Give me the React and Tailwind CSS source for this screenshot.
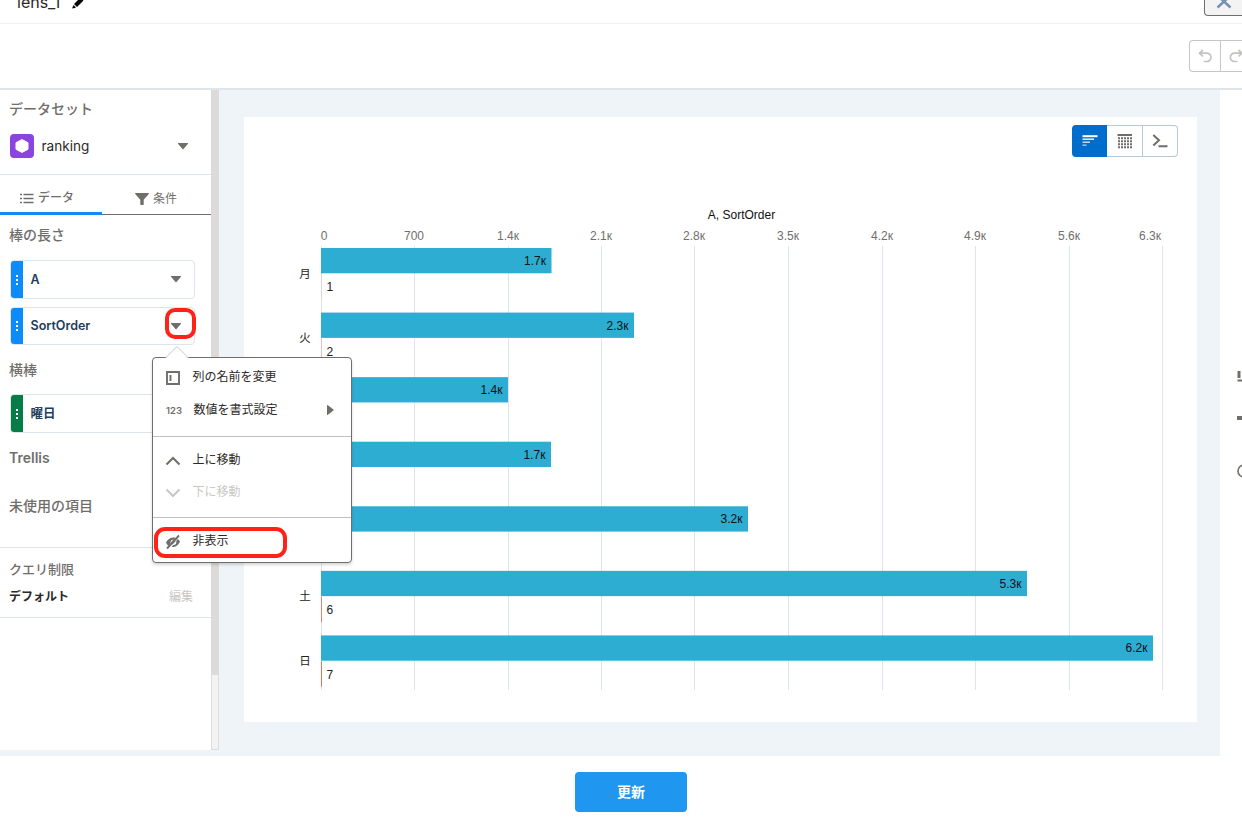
import clsx from 'clsx'

const bars = [
  { day: '月', order: 1, end: 551.5, label: '1.7к' },
  { day: '火', order: 2, end: 634, label: '2.3к' },
  { day: '水', order: 3, end: 508, label: '1.4к' },
  { day: '木', order: 4, end: 551, label: '1.7к' },
  { day: '金', order: 5, end: 748, label: '3.2к' },
  { day: '土', order: 6, end: 1027, label: '5.3к' },
  { day: '日', order: 7, end: 1153, label: '6.2к' },
]

const ticks = ['0', '700', '1.4к', '2.1к', '2.8к', '3.5к', '4.2к', '4.9к', '5.6к', '6.3к']
const tickX = [321, 414, 508, 601, 694, 788, 882, 975, 1069, 1162]

function Caret({ className }) {
  return (
    <svg viewBox="0 0 10 7" className={clsx('w-2.5 h-[7px] fill-[#706e6b]', className)}>
      <path d="M.6 0h8.8c.6 0 .8.5.4.9L5.5 6.1c-.3.4-.7.4-1 0L.2.9C-.2.5 0 0 .6 0z" />
    </svg>
  )
}

function Field({ name, color, className }) {
  return (
    <div className={clsx('ml-2.5 w-[185px] flex items-center rounded border border-[#dde5ec] overflow-hidden', className)}>
      <div className={clsx('w-3 h-full flex flex-col items-center justify-center gap-0.5', color)}>
        <i className="w-0.5 h-0.5 bg-white" />
        <i className="w-0.5 h-0.5 bg-white" />
        <i className="w-0.5 h-0.5 bg-white" />
      </div>
      <span className="flex-1 pl-[7.5px] text-[12.5px] leading-4 font-semibold text-[#1f3d5c]">{name}</span>
      <Caret className="mr-[13px]" />
    </div>
  )
}

function Label({ children, className }) {
  return <div className={clsx('pl-[9px] text-sm leading-5 font-medium text-[#706e6b]', className)}>{children}</div>
}

function Sidebar() {
  return (
    <div className="w-[211px] h-[660px] bg-white shrink-0">
      <Label className="pt-[9px]">データセット</Label>
      <div className="mt-[15px] h-6 pl-2.5 flex items-center">
        <div className="w-6 h-6 rounded bg-[#8a45e0] flex items-center justify-center">
          <svg viewBox="0 0 14 14" className="w-3.5 h-3.5">
            <path d="M7 .6 13 3.7v6.6L7 13.4 1 10.3V3.7z" fill="#fff" stroke="#fff" strokeWidth="1" strokeLinejoin="round" />
          </svg>
        </div>
        <span className="pl-[7.5px] flex-1 text-[13.6px] text-[#2b2826]">ranking</span>
        <Caret className="mr-[23px]" />
      </div>

      {/* Tabs */}
      <div className="mt-4 h-[41px] border-t border-[#dde5ec] flex text-xs text-[#706e6b]">
        <div className="w-[102px] pt-[9px] pl-5 flex items-center border-b-3 border-[#1b87f3] font-medium">
          <svg viewBox="0 0 14 11" className="w-3.5 h-[11px] mr-1" stroke="#706e6b" strokeWidth="1.3">
            <path d="M0 1.500h2M3.500 1.500H13.500M0 5.500h2M3.500 5.500H13.500M0 9.500h2M3.500 9.500H13.500" />
          </svg>
          <span className="-mt-px">データ</span>
        </div>
        <div className="flex-1 pt-[9px] pl-[33px] flex items-center border-b border-[#706e6b]">
          <svg viewBox="0 0 14 12" className="w-3.5 h-3 mr-1 fill-[#706e6b]">
            <path d="M.6 0h12.8c.5 0 .7.5.4.9L8.7 6.7v4.5c0 .4-.2.8-.6.8H6c-.4 0-.7-.4-.7-.8V6.7L.2.9C-.1.5.1 0 .6 0z" />
          </svg>
          <span className="-mt-px">条件</span>
        </div>
      </div>

      <Label className="pt-[10px]">棒の長さ</Label>
      <Field name="A" color="bg-[#0d8bfa]" className="mt-[15px] h-[39px]" />
      <Field name="SortOrder" color="bg-[#0d8bfa]" className="mt-2 h-[38px]" />
      <Label className="pt-[15px]">横棒</Label>
      <Field name="曜日" color="bg-[#077c46]" className="mt-[14px] h-[39px]" />
      <Label className="pt-[15px] font-semibold">Trellis</Label>
      <Label className="pt-[28px]">未使用の項目</Label>
      <div className="mt-[31px] h-[71px] border-y border-[#dde5ec]">
        <div className="pl-[9px] pt-3 text-[13px] leading-[18px] font-medium text-[#706e6b]">クエリ制限</div>
        <div className="pl-[9px] pr-[18px] pt-[10px] flex justify-between text-xs leading-[18px]">
          <span className="font-bold text-[#2b2826]">デフォルト</span>
          <span className="text-[#c9c7c5]">編集</span>
        </div>
      </div>
    </div>
  )
}

function Chart() {
  return (
    <svg viewBox="244 117 953 605" className="absolute inset-0 w-[953px] h-[605px] font-['Liberation_Sans','Noto_Sans_CJK_JP',sans-serif] text-[12px]">
      <text x="741.5" y="219" textAnchor="middle" fill="#111">A, SortOrder</text>
      {tickX.map((x, i) => (
        <g key={x}>
          <rect x={x} y="246" width="1" height="444" fill="#dde5ec" />
          <text x={i === 0 ? 324 : i === 9 ? 1150 : x} y="240" textAnchor="middle" fill="#706e6b">{ticks[i]}</text>
        </g>
      ))}
      {bars.map((b, i) => {
        const y = 248 + i * 64.57
        return (
          <g key={b.day}>
            <rect x="321" y={y} width={b.end - 321} height="25.3" fill="#2dadd2" />
            <rect x="321" y={y + 26} width="1" height="25.3" fill="#e5624a" opacity={b.order / 8} />
            <text x={b.end - 5.5} y={y + 17} textAnchor="end" fill="#111">{b.label}</text>
            <text x="326.5" y={y + 43.2} fill="#222">{b.order}</text>
            <text x="305" y={y + 29.5} textAnchor="middle" fill="#222" className="text-[11.5px]">{b.day}</text>
          </g>
        )
      })}
    </svg>
  )
}

function ViewSwitch() {
  return (
    <div className="absolute left-[828px] top-2 w-[106px] h-8 flex">
      <div className="w-[35px] h-8 rounded-l bg-[#006dcc]">
        <svg viewBox="0 0 35 32" className="w-[35px] h-8" stroke="#fff">
          <path d="M10.500 11.200h15" strokeWidth="2" />
          <path d="M10.500 14.200h11.500" strokeWidth="1.500" opacity=".9" />
          <path d="M10.500 17.200h7.500" strokeWidth="1.500" opacity=".75" />
          <path d="M10.500 20.200h4" strokeWidth="1.500" opacity=".6" />
        </svg>
      </div>
      <div className="w-9 h-8 bg-white border border-l-0 border-[#b6c7d6]">
        <svg viewBox="0 0 34 30" className="w-[34px] h-[30px]" stroke="#706e6b">
          <path d="M10.500 9h14.500" strokeWidth="2" />
          <path d="M11 12.200h14M11 15.200h14M11 18.200h14M11 21.200h14" strokeWidth="2" strokeDasharray="2 1" />
        </svg>
      </div>
      <div className="w-[35px] h-8 bg-white rounded-r border border-l-0 border-[#b6c7d6]">
        <svg viewBox="0 0 34 30" className="w-[34px] h-[30px]" fill="none" stroke="#706e6b" strokeWidth="2">
          <path d="m10.300 9 5.700 5.200-5.700 5.200M15.500 20.200H24.500" />
        </svg>
      </div>
    </div>
  )
}

function MenuItem({ icon, children, className }) {
  return (
    <div className={clsx('flex items-center pl-[13px] text-xs leading-[18px]', className)}>
      <svg viewBox="0 0 14 14" className="w-3.5 h-3.5 mr-[12.5px] mt-0.5 overflow-visible" fill="none" stroke="currentColor" strokeWidth="2">
        {icon}
      </svg>
      {children}
    </div>
  )
}

function Menu() {
  return (
    <div className="absolute left-[152px] top-[357px] w-[200px] h-[206px] rounded border border-[#706e6b] bg-white shadow-[0_2px_3px_rgba(0,0,0,0.16)] text-[#706e6b]">
      {/* Pointer */}
      <svg viewBox="0 0 24 13" className="absolute left-3 -top-3 w-6 h-[13px]">
        <path d="M0 13 12 .5 24 13z" fill="#fff" />
        <path d="M.5 12 12 .5 23.500 12" fill="none" stroke="#c9c7c5" strokeWidth="1" />
      </svg>
      <div className="h-[79px] pt-[10px] border-b border-[#c0bebc]">
        <MenuItem icon={<path d="M1 1h12v12H1zM4.500 4v6" strokeWidth="1.9" />}>
          <span className="text-[#2b2826]">列の名前を変更</span>
        </MenuItem>
        <div className="mt-[14px] flex items-center text-xs leading-[18px]">
          <span className="w-[40.5px] pl-[13px] pt-0.5 text-[9.5px] font-semibold font-['Inter']">123</span>
          <span className="flex-1 text-[#2b2826]">数値を書式設定</span>
          <svg viewBox="0 0 7 10" className="mr-[17.5px] w-[7px] h-2.5 fill-[#706e6b]">
            <path d="M0 .6v8.800c0 .6.500.8.900.4l5.500-4.300c.4-.3.4-.7 0-1L.9.200C.5-.2 0 0 0 .6z" />
          </svg>
        </div>
      </div>
      <div className="h-[81px] pt-[14px] border-b border-[#c0bebc]">
        <MenuItem icon={<path d="m.5 10.500 6.500-6.500 6.500 6.500" />}>
          <span className="text-[#2b2826]">上に移動</span>
        </MenuItem>
        <MenuItem className="mt-[14px] text-[#c9c7c5]" icon={<path d="m.5 3.500 6.500 6.500 6.500-6.500" />}>
          下に移動
        </MenuItem>
      </div>
      <MenuItem
        className="mt-[14px]"
        icon={
          <>
            <path d="M0 7.500C2.300 3.200 6 1.800 9.500 2.800L7.900 4.800C5.200 4.200 4 6.300 4.500 8.500L2.600 11C1.500 10.200.6 9 0 7.500zM14 6.800C12 11 9 12.600 5.600 12L7.200 10C9.800 10.200 10.800 8.200 10.200 6L11.900 3.900C12.900 4.600 13.500 5.600 14 6.800z" fill="currentColor" stroke="none" />
            <path d="M1 13.500 13 .5" strokeWidth="1.900" />
            <path d="M5.500 8.700 8.700 5.300" strokeWidth="2.600" />
          </>
        }
      >
        <span className="text-[#2b2826]">非表示</span>
      </MenuItem>
    </div>
  )
}

export default function App() {
  return (
    <div className="relative w-[1242px] h-[820px] overflow-hidden bg-white font-['Inter','Noto_Sans_CJK_JP',sans-serif]">
      {/* Title row */}
      <div className="h-6 border-b border-[#f0f0f0] flex justify-between overflow-hidden">
        <div className="flex pl-[17px]">
          <span className="-mt-2 text-[16px] leading-5 text-[#2b2826]">lens_1</span>
          <svg viewBox="0 0 14 14" className="-mt-[5px] ml-3 w-3.5 h-3.5 fill-[#080707]">
            <path d="m8.500 2.500 3 3-6.500 6.500-3-3zM1.600 10 4 12.400.900 13.400c-.4.1-.7-.2-.6-.6zM9.300 1.700l3 3 1.200-1.200c.4-.4.4-1 0-1.400L11.900.5c-.4-.4-1-.4-1.400 0z" />
          </svg>
        </div>
        <div className="-mt-4 w-[38px] h-8 shrink-0 rounded-bl border border-r-0 border-[#706e6b] bg-[#f3f3f3]">
          <svg viewBox="0 0 38 30" className="w-[38px] h-[30px]" fill="none" stroke="#7391b4" strokeWidth="2.500">
            <path d="M12.500 10.500 25.500 22.500M25.500 10.500 12.500 22.500" />
          </svg>
        </div>
      </div>

      {/* Toolbar */}
      <div className="h-16 flex justify-end items-center">
        <div className="w-[53px] h-8 flex rounded-l border border-r-0 border-[#c9c7c5]">
          <div className="w-[31px] border-r border-[#c9c7c5]">
            <svg viewBox="0 0 30 30" className="w-[30px] h-[30px]" fill="none" stroke="#c4c2c0" strokeWidth="1.700">
              <path d="M13 9 9.500 12.200l3.500 3.300M9.500 12.200h7.300a4 4 0 0 1 0 8.300h-3" />
            </svg>
          </div>
          <svg viewBox="0 0 21 30" className="w-[21px] h-[30px]" fill="none" stroke="#c4c2c0" strokeWidth="1.700">
            <path d="m17.500 9 3.500 3.200-3.500 3.300M21 12.200h-7.500a4 4 0 0 0 0 8.300h3" />
          </svg>
        </div>
      </div>

      {/* Body */}
      <div className="h-[668px] border-t-2 border-[#e0e5ea] flex">
        <div className="w-[1220px] bg-[#eef4f8] flex">
          <Sidebar />
          <div className="w-2 h-[660px] bg-[#f3f3f3] border border-t-0 border-[#dddddd]">
            <div className="-mx-px h-[585px] bg-[#dddbda]" />
          </div>
          <div className="relative ml-[25px] mt-[27px] w-[953px] h-[605px] bg-white">
            <Chart />
            <ViewSwitch />
          </div>
        </div>
        <div className="w-[22px] overflow-hidden">
          <svg viewBox="0 0 22 400" className="w-[22px] h-[400px]" fill="#706e6b">
            <path d="M17.500 281h3v7h-3zM17.500 289.500h4.500v2h-4.500zM17 326h5v4h-5z" />
            <circle cx="24" cy="381" r="6" fill="none" stroke="#706e6b" strokeWidth="1.600" />
          </svg>
        </div>
      </div>

      <div className="pt-4 pl-[575px]">
        <button className="block w-28 h-10 rounded bg-[#1f96f0] text-sm font-bold text-white">更新</button>
      </div>

      <Menu />

      {/* Highlights */}
      <div className="absolute left-[165px] top-[308px] w-[31px] h-[31px] rounded-[10px] border-[4.500px] border-[#ff2219]" />
      <div className="absolute left-[154px] top-[527px] w-[133px] h-[31px] rounded-[11px] border-[4.500px] border-[#ff2219]" />
    </div>
  )
}
